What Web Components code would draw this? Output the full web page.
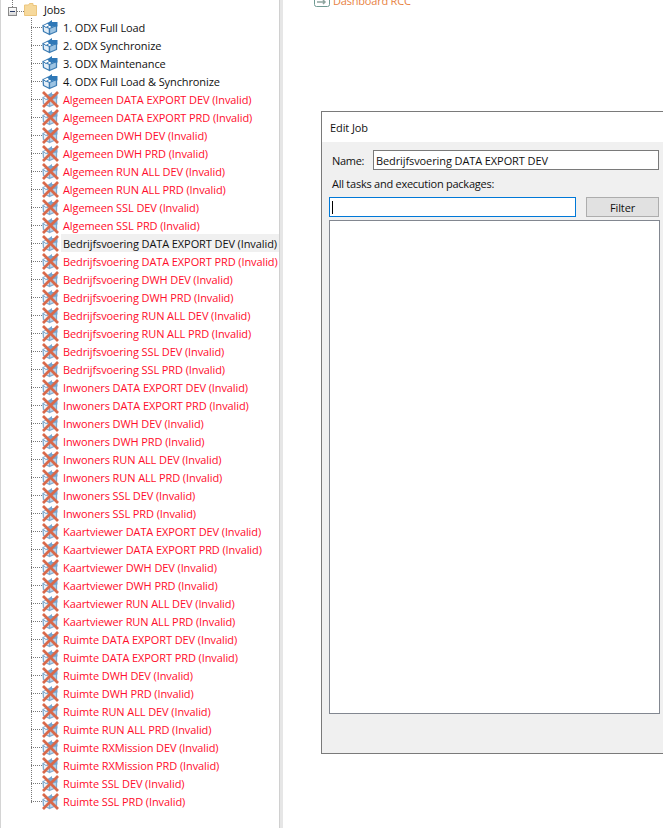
<!DOCTYPE html>
<html>
<head>
<meta charset="utf-8">
<style>
  html, body { margin: 0; height: 100%; background: #fff; overflow: hidden; }
  body { font-family: "Open Sans", "Liberation Sans", sans-serif; font-size: 11px; letter-spacing: -0.1px; }
</style>
</head>
<body>
<job-screen></job-screen>

<script>
// open carton with the arrow coming out of the top right
const BOX_ICON = /*html*/`
  <path d="M1 6.500 L7.500 9.500 L7.500 15.500 L1.500 12.500 Z" fill="#e4eef7" stroke="#3d7db4" stroke-width="1.300" stroke-linejoin="round"/>
  <path d="M7.500 9.500 L14.500 6.500 L14.500 12.500 L7.500 15.500 Z" fill="#9cc3e2" stroke="#3d7db4" stroke-width="1.300" stroke-linejoin="round"/>
  <path d="M1 6.500 L6 4 L9 5.500 L4 8.500 Z" fill="#fff" stroke="#3d7db4" stroke-width="1"/>
  <path d="M5 4.500 L10 1 L10 3 L15.500 3 L15.500 7.500 L10.500 7.500 L10.500 9 Z" fill="#2f78b7"/>`

class JobIcon extends HTMLElement {
  connectedCallback () {
    const invalid = this.hasAttribute('invalid')
    this.attachShadow({ mode: 'open' }).innerHTML = /*html*/`
    <style>
      :host { display: block; width: 17px; height: 17px; flex: none; }
      svg { display: block; }
      .faded { opacity: .65; }
    </style>
    <svg width="17" height="17" viewBox="0 0 17 17">
      <g class="${invalid ? 'faded' : ''}">${BOX_ICON}</g>
      ${invalid ? '<path d="M1 1 L16 16 M16 1 L1 16" stroke="#d9694a" stroke-width="2.800" fill="none"/>' : ''}
    </svg>`
  }
}

class TreeRow extends HTMLElement {
  connectedCallback () {
    const invalid = this.hasAttribute('invalid')
    const current = this.hasAttribute('current')
    const color = invalid && !current ? '#ff0d2c' : '#111'
    this.attachShadow({ mode: 'open' }).innerHTML = /*html*/`
    <style>
      :host { display: flex; align-items: center; height: 18px; padding-left: 30px; }
      .stem { width: 11px; flex: none; border-top: 1px dotted #777; margin-top: 1px; }
      job-icon { margin-right: 3px; }
      .label {
        flex: 1;
        color: ${color};
        height: 18px;
        line-height: 19px;
        margin-left: -1px;
        padding-left: 2px;
        white-space: nowrap;
        background: ${current ? '#f0f0f0' : 'none'};
      }
    </style>
    <span class="stem"></span>
    <job-icon ${invalid ? 'invalid' : ''}></job-icon>
    <span class="label"><slot></slot></span>`
  }
}

class JobTree extends HTMLElement {
  connectedCallback () {
    const jobs = ['1. ODX Full Load', '2. ODX Synchronize', '3. ODX Maintenance', '4. ODX Full Load & Synchronize']
    const full = ['DATA EXPORT DEV', 'DATA EXPORT PRD', 'DWH DEV', 'DWH PRD', 'RUN ALL DEV', 'RUN ALL PRD']
    const groups = [
      ['Algemeen', [...full, 'SSL DEV', 'SSL PRD']],
      ['Bedrijfsvoering', [...full, 'SSL DEV', 'SSL PRD']],
      ['Inwoners', [...full, 'SSL DEV', 'SSL PRD']],
      ['Kaartviewer', full],
      ['Ruimte', [...full, 'RXMission DEV', 'RXMission PRD', 'SSL DEV', 'SSL PRD']]
    ]
    let rows = jobs.map(j => `<tree-row>${j.replace('&', '&amp;')}</tree-row>`).join('')
    for (const [area, names] of groups) {
      for (const n of names) {
        const current = area === 'Bedrijfsvoering' && n === 'DATA EXPORT DEV'
        rows += `<tree-row invalid ${current ? 'current' : ''}>${area} ${n} (Invalid)</tree-row>`
      }
    }
    this.attachShadow({ mode: 'open' }).innerHTML = /*html*/`
    <style>
      :host {
        display: block;
        width: 278px;
        flex: none;
        border-left: 1px solid #d4d4d4;
        overflow: hidden;
      }
      .root { display: flex; align-items: center; height: 18px; position: relative; }
      .up { position: absolute; left: 11px; top: 0; height: 7px; border-left: 1px dotted #777; }
      .toggle {
        width: 7px; height: 7px; margin: 4px 0 0 7px; flex: none;
        border: 1px solid #8a8a8a;
        background: linear-gradient(#fff, #d8d8d8);
        display: flex; align-items: center; justify-content: center;
      }
      .toggle i { display: block; width: 5px; height: 1px; background: #2a3c66; }
      .dash { width: 7px; flex: none; border-top: 1px dotted #777; margin-top: 4px; }
      .root svg { flex: none; margin: 1px 7px 0 0; }
      .root span.t { color: #111; line-height: 20px; height: 18px; }
      .branch { position: relative; }
      .trunk { position: absolute; left: 30px; top: 0; height: 785px; border-left: 1px dotted #777; }
    </style>
    <div class="root">
      <span class="up"></span>
      <div class="toggle"><i></i></div>
      <div class="dash"></div>
      <svg width="13" height="13" viewBox="0 0 13 13">
        <path d="M0.500 2 L4.500 2 L5.500 0.500 L9 0.500 L9 2.500 L12.500 2.500 L12.500 12.500 L0.500 12.500 Z" fill="#f6d99c" stroke="#ecc67e" stroke-width="1"/>
      </svg>
      <span class="t">Jobs</span>
    </div>
    <div class="branch">
      <div class="trunk"></div>
      ${rows}
    </div>`
  }
}

class EditJob extends HTMLElement {
  connectedCallback () {
    this.attachShadow({ mode: 'open' }).innerHTML = /*html*/`
    <style>
      :host {
        display: block;
        width: 360px;
        height: 643px;
        box-sizing: border-box;
        border: 1px solid #7a7a7a;
        background: #f0f0f0;
        color: #111;
      }
      .title { height: 30px; background: #fff; display: flex; align-items: center; padding-left: 8px; }
      .body { padding: 8px 0 0 7px; display: flex; flex-direction: column; width: 331px; }
      .name { display: flex; align-items: center; height: 20px; }
      .name label { width: 44px; padding-left: 3px; box-sizing: border-box; letter-spacing: -0.3px; }
      .field {
        width: 286px; height: 20px; box-sizing: border-box;
        border: 1px solid #7a7a7a; background: #fff;
        display: flex; align-items: center; padding-left: 2px;
      }
      .hint { height: 27px; display: flex; align-items: center; padding-left: 3px; letter-spacing: -0.25px; }
      .filter { display: flex; justify-content: space-between; width: 330px; height: 20px; }
      .search {
        width: 247px; height: 20px; box-sizing: border-box;
        border: 1px solid #0078d7; background: #fff;
        display: flex; align-items: center; padding-left: 2px;
      }
      .search i { display: block; width: 1px; height: 13px; background: #000; }
      .btn {
        width: 73px; height: 20px; box-sizing: border-box;
        border: 1px solid #adadad; background: #e1e1e1;
        display: flex; align-items: center; justify-content: center;
      }
      .list { margin-top: 3px; height: 494px; box-sizing: border-box; border: 1px solid #828790; background: #fff; }
    </style>
    <div class="title">Edit Job</div>
    <div class="body">
      <div class="name"><label>Name:</label><div class="field">Bedrijfsvoering DATA EXPORT DEV</div></div>
      <div class="hint">All tasks and execution packages:</div>
      <div class="filter">
        <div class="search"><i></i></div>
        <div class="btn">Filter</div>
      </div>
      <div class="list"></div>
    </div>`
  }
}

class JobScreen extends HTMLElement {
  connectedCallback () {
    this.attachShadow({ mode: 'open' }).innerHTML = /*html*/`
    <style>
      :host { display: flex; height: 828px; overflow: hidden; }
      .divider { width: 4px; flex: none; background: #e6e6e6; border-left: 1px solid #d0d0d0; box-sizing: border-box; }
      .right { flex: 1; min-width: 0; display: flex; flex-direction: column; padding-left: 31px; }
      .link { display: flex; align-items: center; gap: 3px; height: 16px; margin-top: -9px; color: #e8823f; letter-spacing: -0.2px; }
      .link svg { flex: none; }
      .link span { margin-top: 2px; }
      edit-job { margin-top: 104px; margin-left: 7px; flex: none; }
    </style>
    <job-tree></job-tree>
    <div class="divider"></div>
    <div class="right">
      <div class="link">
        <svg width="16" height="16" viewBox="0 0 16 16">
          <rect x="0.500" y="0.500" width="15" height="15" rx="2" fill="#fff" stroke="#6f9a93"/>
          <path d="M3 11 L11 11 M9 9 L11 11 L9 13" fill="none" stroke="#8fa5a0" stroke-width="1.500"/>
        </svg>
        <span>Dashboard RCC</span>
      </div>
      <edit-job></edit-job>
    </div>`
  }
}

customElements.define('job-icon', JobIcon)
customElements.define('tree-row', TreeRow)
customElements.define('job-tree', JobTree)
customElements.define('edit-job', EditJob)
customElements.define('job-screen', JobScreen)
</script>
</body>
</html>
